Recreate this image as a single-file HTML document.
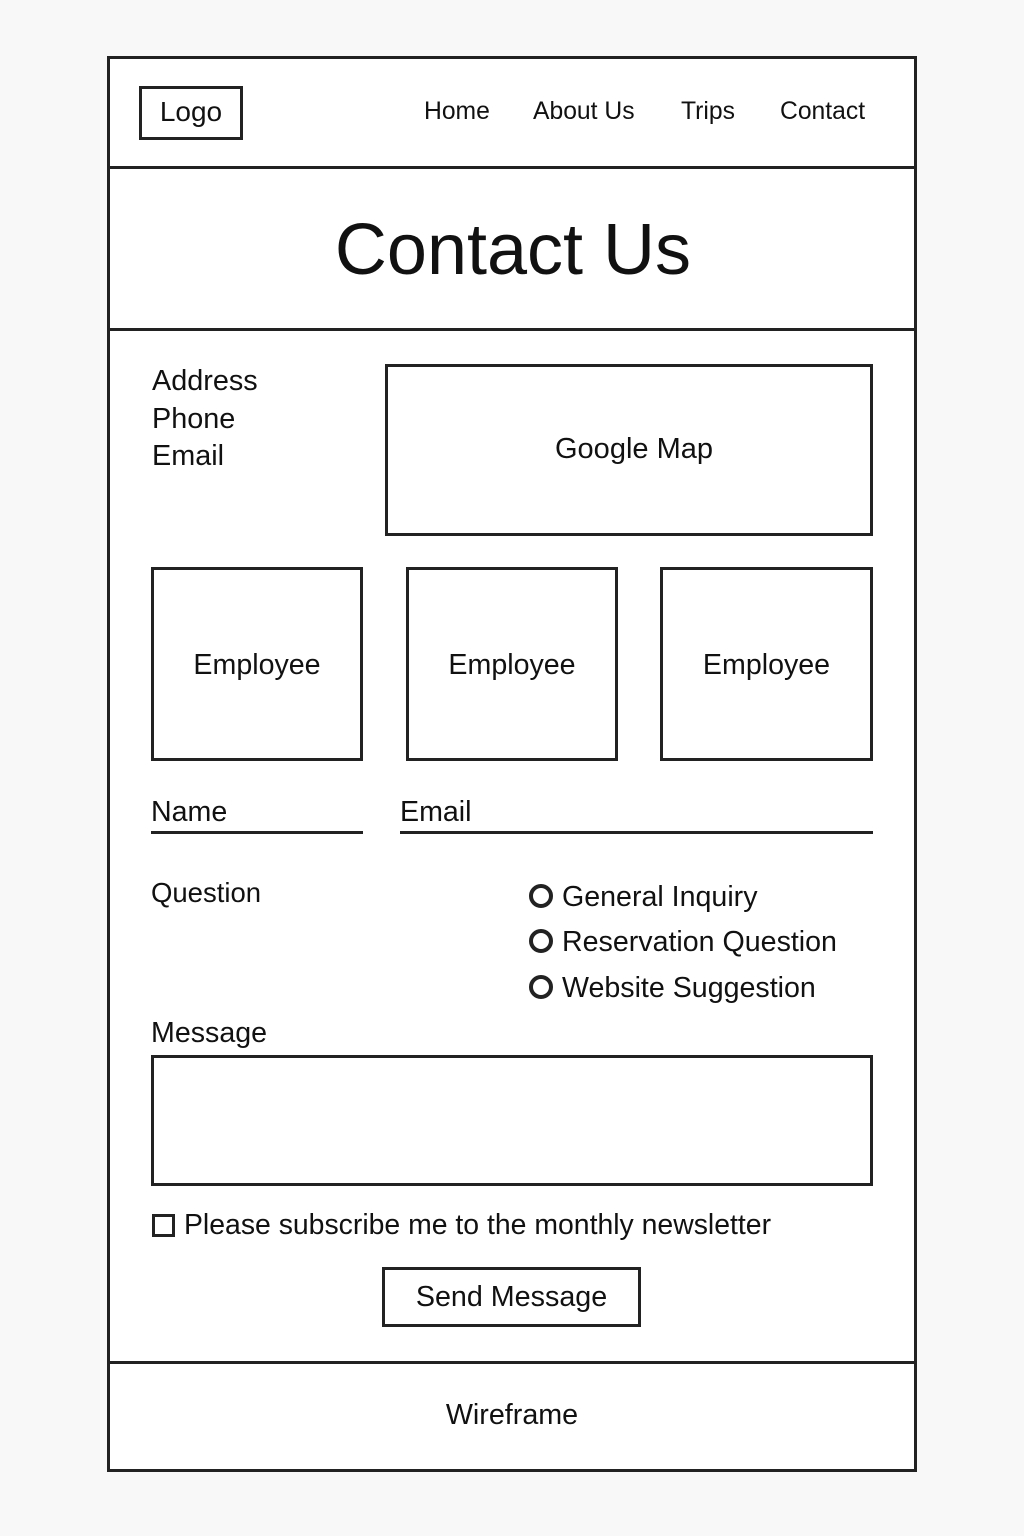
<!DOCTYPE html>
<html><head><meta charset="utf-8"><style>
*{margin:0;padding:0;box-sizing:border-box}
body{width:1024px;height:1536px;background:#f8f8f8;position:relative;font-family:"Liberation Sans",Arial,sans-serif;color:#111;overflow:hidden}
.a{position:absolute}
.b{position:absolute;border:3px solid #222;background:#fff}
.l{position:absolute;background:#222;height:3px}
.t{position:absolute;white-space:nowrap;line-height:40px;height:40px}
.c{text-align:center}
.r{position:absolute;width:24px;height:24px;border:4px solid #222;border-radius:50%}
</style></head><body>
<div class="b" style="left:107px;top:56px;width:810px;height:1416px"></div>
<div class="l" style="left:108px;top:166px;width:808px"></div>
<div class="l" style="left:108px;top:328px;width:808px"></div>
<div class="l" style="left:108px;top:1361px;width:808px"></div>

<div class="b" style="left:139px;top:86px;width:104px;height:54px"></div>
<div class="t c" style="left:139px;top:92px;width:104px;font-size:28px">Logo</div>
<div class="t" style="left:424px;top:92px;font-size:24.7px">Home</div>
<div class="t" style="left:533px;top:92px;font-size:24.7px">About Us</div>
<div class="t" style="left:681px;top:92px;font-size:24.7px">Trips</div>
<div class="t" style="left:780px;top:92px;font-size:24.7px">Contact</div>

<div class="t c" style="left:108px;top:210px;width:810px;height:80px;line-height:80px;font-size:72px">Contact Us</div>

<div class="t" style="left:152px;top:361px;font-size:28.8px">Address</div>
<div class="t" style="left:152px;top:399px;font-size:28.8px">Phone</div>
<div class="t" style="left:152px;top:436px;font-size:28.8px">Email</div>

<div class="b" style="left:385px;top:364px;width:488px;height:172px"></div>
<div class="t c" style="left:385px;top:429px;width:498px;font-size:29px">Google Map</div>

<div class="b" style="left:151px;top:567px;width:212px;height:194px"></div>
<div class="b" style="left:406px;top:567px;width:212px;height:194px"></div>
<div class="b" style="left:660px;top:567px;width:213px;height:194px"></div>
<div class="t c" style="left:151px;top:645px;width:212px;font-size:28.6px">Employee</div>
<div class="t c" style="left:406px;top:645px;width:212px;font-size:28.6px">Employee</div>
<div class="t c" style="left:660px;top:645px;width:213px;font-size:28.6px">Employee</div>

<div class="t" style="left:151px;top:792px;font-size:28.6px">Name</div>
<div class="l" style="left:151px;top:831px;width:212px"></div>
<div class="t" style="left:400px;top:792px;font-size:28.6px">Email</div>
<div class="l" style="left:400px;top:831px;width:473px"></div>

<div class="t" style="left:151px;top:873px;font-size:27.5px">Question</div>
<div class="r" style="left:529px;top:884px"></div>
<div class="r" style="left:529px;top:929px"></div>
<div class="r" style="left:529px;top:975px"></div>
<div class="t" style="left:562px;top:877px;font-size:28.6px">General Inquiry</div>
<div class="t" style="left:562px;top:922px;font-size:28.6px">Reservation Question</div>
<div class="t" style="left:562px;top:968px;font-size:28.6px">Website Suggestion</div>

<div class="t" style="left:151px;top:1013px;font-size:28.6px">Message</div>
<div class="b" style="left:151px;top:1055px;width:722px;height:131px"></div>

<div class="a" style="left:152px;top:1214px;width:23px;height:23px;border:3px solid #222;background:#fff"></div>
<div class="t" style="left:184px;top:1205px;font-size:28.4px">Please subscribe me to the monthly newsletter</div>

<div class="b" style="left:382px;top:1267px;width:259px;height:60px"></div>
<div class="t c" style="left:382px;top:1277px;width:259px;font-size:28.7px">Send Message</div>

<div class="t c" style="left:108px;top:1395px;width:808px;font-size:28.7px">Wireframe</div>
</body></html>
